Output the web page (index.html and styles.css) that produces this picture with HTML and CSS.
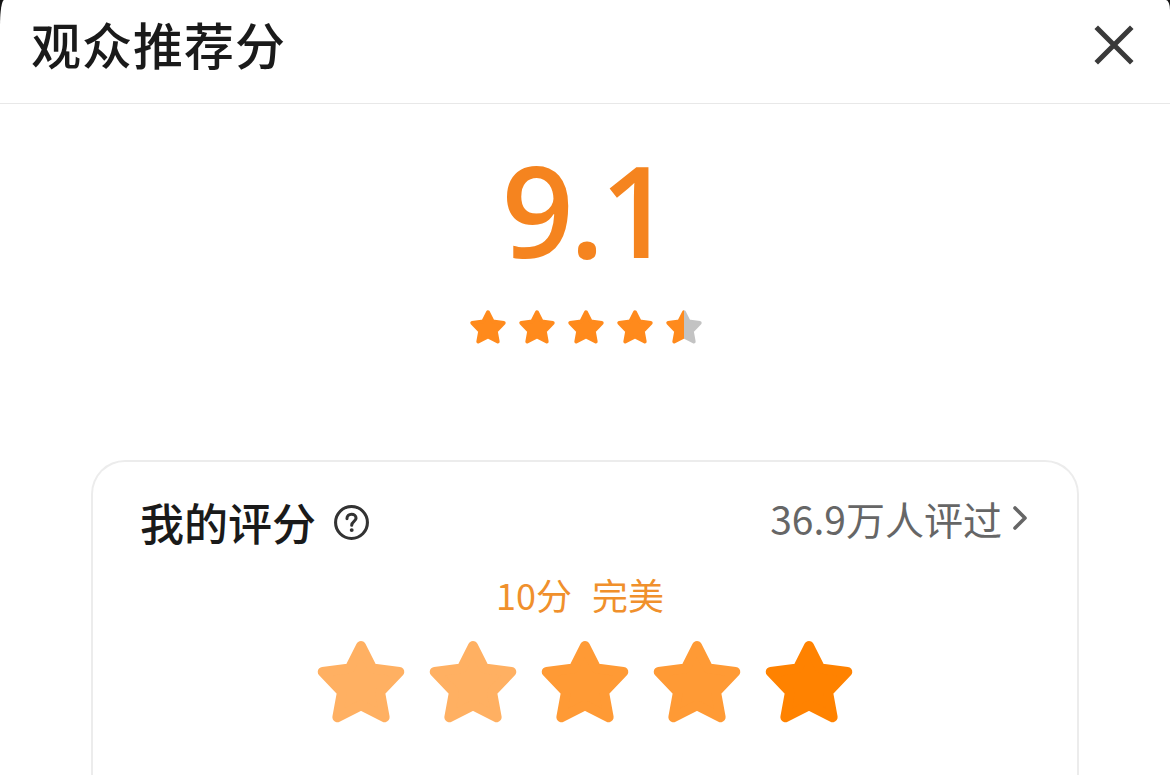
FILE: index.html
```html
<!DOCTYPE html>
<html lang="zh-CN">
<head>
    <meta charset="UTF-8">
    <meta name="viewport" content="width=device-width, initial-scale=1.0">
    <title>观众推荐分</title>
    <link rel="stylesheet" href="styles.css">
</head>
<body>
    <svg width="0" height="0" class="defs">
        <defs>
            <linearGradient id="half" x1="0" x2="1" y1="0" y2="0">
                <stop offset="50%" stop-color="#ff8a1c"/>
                <stop offset="50%" stop-color="#c3c3c3"/>
            </linearGradient>
            <symbol id="star" viewBox="0 0 24 24">
                <polygon points="12,2.6 14.96,8.45 21.99,9.36 16.96,14.6 18.17,21.2 12,18.1 5.83,21.2 7.04,14.6 2.01,9.36 9.04,8.45"/>
            </symbol>
        </defs>
    </svg>
    <div class="sheet">
        <div class="header">
            <h1 class="title">观众推荐分</h1>
            <button class="close" type="button">
                <svg viewBox="0 0 40 40" width="40" height="40">
                    <path d="M4 4 L36 36 M36 4 L4 36" stroke="#3a3a3a" stroke-width="5" stroke-linecap="square"/>
                </svg>
            </button>
        </div>

        <div class="score">
            <div class="score-num">9.1</div>
            <div class="small-stars">
                <svg class="s-star"><use href="#star"/></svg>
                <svg class="s-star"><use href="#star"/></svg>
                <svg class="s-star"><use href="#star"/></svg>
                <svg class="s-star"><use href="#star"/></svg>
                <svg class="s-star half"><use href="#star"/></svg>
            </div>
        </div>

        <div class="card">
            <div class="card-head">
                <div class="my-title">
                    <span>我的评分</span>
                    <svg class="help" viewBox="0 0 36 36" width="37" height="37">
                        <circle cx="18" cy="18" r="15.5" fill="none" stroke="#333" stroke-width="3"/>
                        <path d="M13.6 14.2 C13.6 11.6 15.5 10 18 10 C20.6 10 22.4 11.6 22.4 13.8 C22.4 16.8 18.2 17 18.2 20.6" fill="none" stroke="#333" stroke-width="3" stroke-linecap="round"/>
                        <circle cx="18.2" cy="25.4" r="1.9" fill="#333"/>
                    </svg>
                </div>
                <a class="count" href="#">36.9万人评过
                    <svg viewBox="0 0 20 30" width="20" height="30">
                        <path d="M5 5 L15 15 L5 25" fill="none" stroke="#666" stroke-width="3.6" stroke-linecap="round" stroke-linejoin="round"/>
                    </svg>
                </a>
            </div>
            <div class="my-score">10分&nbsp;&nbsp;完美</div>
            <div class="big-stars">
                <svg class="b-star light"><use href="#star"/></svg>
                <svg class="b-star light"><use href="#star"/></svg>
                <svg class="b-star mid"><use href="#star"/></svg>
                <svg class="b-star mid"><use href="#star"/></svg>
                <svg class="b-star full"><use href="#star"/></svg>
            </div>
        </div>
    </div>
</body>
</html>
```

FILE: styles.css
```css
html, body {
    margin: 0;
    background-color: #141414;
}
body {
    font-family: "Noto Sans CJK SC", "Noto Sans", sans-serif;
}
.defs {
    position: absolute;
}
.sheet {
    background-color: #fff;
    min-height: 775px;
    border-top-left-radius: 4px 26px;
    border-top-right-radius: 4px 10px;
    overflow: hidden;
}
.header {
    height: 104px;
    display: flex;
    align-items: center;
    justify-content: space-between;
    padding: 0 36px 0 31px;
    border-bottom: 1px solid #e8e8e8;
    box-sizing: border-box;
}
.title {
    margin: 0;
    font-size: 50px;
    font-weight: 500;
    color: #1a1a1a;
    letter-spacing: 1px;
    margin-top: -18px;
}
.close {
    border: none;
    background: none;
    padding: 0;
    display: flex;
    margin-top: -14px;
    cursor: pointer;
}
.score {
    display: flex;
    flex-direction: column;
    align-items: center;
    padding-top: 42px;
}
.score-num {
    font-family: "Open Sans", sans-serif;
    font-size: 126px;
    font-weight: 600;
    line-height: 1;
    color: #f5841f;
    letter-spacing: -4px;
}
.small-stars {
    display: flex;
    gap: 11px;
    margin-top: 36px;
    margin-left: 2px;
}
.s-star {
    width: 38px;
    height: 38px;
    fill: #ff8a1c;
    stroke: #ff8a1c;
    stroke-width: 2.4;
    stroke-linejoin: round;
}
.s-star.half {
    fill: url(#half);
    stroke: url(#half);
}
.card {
    margin: 114px 91px 0;
    border: 2px solid #ececec;
    border-bottom: none;
    border-radius: 34px 34px 0 0;
    padding: 28px 51px 60px 47px;
    min-height: 300px;
}
.card-head {
    display: flex;
    align-items: center;
    justify-content: space-between;
}
.my-title {
    display: flex;
    align-items: center;
    gap: 17px;
    font-size: 44px;
    font-weight: 500;
    color: #1a1a1a;
}
.count {
    display: flex;
    align-items: center;
    gap: 8px;
    font-size: 39px;
    color: #666;
    text-decoration: none;
    margin-top: -8px;
    margin-right: -4px;
}
.my-score {
    text-align: center;
    font-size: 36px;
    color: #f0902c;
    margin-top: 14px;
    margin-left: -6px;
    word-spacing: 2px;
}
.big-stars {
    display: flex;
    justify-content: center;
    gap: 20px;
    margin-top: 16px;
    margin-left: 4px;
}
.b-star {
    width: 92px;
    height: 92px;
    stroke-width: 2.6;
    stroke-linejoin: round;
}
.b-star.light {
    fill: #ffb062;
    stroke: #ffb062;
}
.b-star.mid {
    fill: #ff9a35;
    stroke: #ff9a35;
}
.b-star.full {
    fill: #ff8200;
    stroke: #ff8200;
}
```
